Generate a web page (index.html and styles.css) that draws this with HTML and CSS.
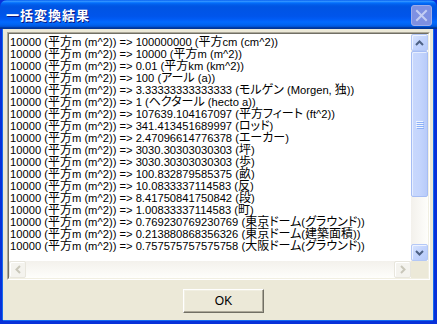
FILE: index.html
```html
<!DOCTYPE html>
<html lang="ja">
<head>
<meta charset="utf-8">
<title>一括変換結果</title>
<link rel="stylesheet" href="styles.css">
</head>
<body>
<div class="window">
  <div class="titlebar">
    <span class="title">一括変換結果</span>
    <span class="close" aria-label="閉じる">
      <svg width="21" height="21" viewBox="0 0 21 21">
        <path d="M6 6 L15 15 M15 6 L6 15" stroke="#c3cdf3" stroke-width="2" stroke-linecap="square"/>
      </svg>
    </span>
  </div>
  <div class="client">
    <div class="editbox">
      <div class="edit-grid">
        <div class="text">
          <div class="line">10000 (<span class="j">平方</span>m (m^2)) =&gt; 100000000 (<span class="j">平方</span>cm (cm^2))</div>
          <div class="line">10000 (<span class="j">平方</span>m (m^2)) =&gt; 10000 (<span class="j">平方</span>m (m^2))</div>
          <div class="line">10000 (<span class="j">平方</span>m (m^2)) =&gt; 0.01 (<span class="j">平方</span>km (km^2))</div>
          <div class="line">10000 (<span class="j">平方</span>m (m^2)) =&gt; 100 (<span class="j">アール</span> (a))</div>
          <div class="line">10000 (<span class="j">平方</span>m (m^2)) =&gt; 3.33333333333333 (<span class="j">モルゲン</span> (Morgen, <span class="j">独</span>))</div>
          <div class="line">10000 (<span class="j">平方</span>m (m^2)) =&gt; 1 (<span class="j">ヘクタール</span> (hecto a))</div>
          <div class="line">10000 (<span class="j">平方</span>m (m^2)) =&gt; 107639.104167097 (<span class="j">平方フィート</span> (ft^2))</div>
          <div class="line">10000 (<span class="j">平方</span>m (m^2)) =&gt; 341.413451689997 (<span class="j">ロッド</span>)</div>
          <div class="line">10000 (<span class="j">平方</span>m (m^2)) =&gt; 2.47096614776378 (<span class="j">エーカー</span>)</div>
          <div class="line">10000 (<span class="j">平方</span>m (m^2)) =&gt; 3030.30303030303 (<span class="j">坪</span>)</div>
          <div class="line">10000 (<span class="j">平方</span>m (m^2)) =&gt; 3030.30303030303 (<span class="j">歩</span>)</div>
          <div class="line">10000 (<span class="j">平方</span>m (m^2)) =&gt; 100.832879585375 (<span class="j">畝</span>)</div>
          <div class="line">10000 (<span class="j">平方</span>m (m^2)) =&gt; 10.0833337114583 (<span class="j">反</span>)</div>
          <div class="line">10000 (<span class="j">平方</span>m (m^2)) =&gt; 8.41750841750842 (<span class="j">段</span>)</div>
          <div class="line">10000 (<span class="j">平方</span>m (m^2)) =&gt; 1.00833337114583 (<span class="j">町</span>)</div>
          <div class="line">10000 (<span class="j">平方</span>m (m^2)) =&gt; 0.769230769230769 (<span class="j">東京ドーム</span>(<span class="j">グラウンド</span>))</div>
          <div class="line">10000 (<span class="j">平方</span>m (m^2)) =&gt; 0.213880868356326 (<span class="j">東京ドーム</span>(<span class="j">建築面積</span>))</div>
          <div class="line">10000 (<span class="j">平方</span>m (m^2)) =&gt; 0.757575757575758 (<span class="j">大阪ドーム</span>(<span class="j">グラウンド</span>))</div>
        </div>
        <div class="vscroll">
          <div class="sbtn">
            <svg width="9" height="6" viewBox="0 0 9 6"><path d="M1 5 L4.5 1.5 L8 5" fill="none" stroke="#4d6185" stroke-width="2"/></svg>
          </div>
          <div class="vtrack">
            <div class="thumb">
              <span class="grip"></span><span class="grip"></span><span class="grip"></span><span class="grip"></span>
            </div>
          </div>
          <div class="sbtn">
            <svg width="9" height="6" viewBox="0 0 9 6"><path d="M1 1 L4.5 4.5 L8 1" fill="none" stroke="#4d6185" stroke-width="2"/></svg>
          </div>
        </div>
        <div class="hscroll">
          <div class="sbtn disabled">
            <svg width="6" height="9" viewBox="0 0 6 9"><path d="M5 1 L1.5 4.5 L5 8" fill="none" stroke="#c9c7ba" stroke-width="2"/></svg>
          </div>
          <div class="htrack"></div>
          <div class="sbtn disabled">
            <svg width="6" height="9" viewBox="0 0 6 9"><path d="M1 1 L4.5 4.5 L1 8" fill="none" stroke="#c9c7ba" stroke-width="2"/></svg>
          </div>
        </div>
        <div class="corner"></div>
      </div>
    </div>
    <div class="buttons">
      <button class="ok" type="button">OK</button>
    </div>
  </div>
</div>
</body>
</html>
```
FILE: styles.css
```css
html, body {
  margin: 0;
  padding: 0;
  background: #0831d9;
}

.window {
  width: 437px;
  height: 324px;
  display: flex;
  flex-direction: column;
  box-sizing: border-box;
  border-radius: 7px 7px 0 0;
  overflow: hidden;
  background: #0831d9;
}

.titlebar {
  height: 29px;
  flex: none;
  display: flex;
  align-items: center;
  justify-content: space-between;
  padding: 0 6px 0 6px;
  box-sizing: border-box;
  background: linear-gradient(to bottom,
    #0058ee 0%, #3593ff 4%, #288eff 6%, #127dff 8%, #036ffc 10%,
    #0262ee 14%, #0057e5 20%, #0054e3 24%, #0055eb 56%, #005bf5 66%,
    #026afe 76%, #0062ef 86%, #0052d6 92%, #0040ab 94%, #003092 100%);
}

.title {
  font-family: "Noto Sans CJK JP", sans-serif;
  font-weight: bold;
  font-size: 13px;
  line-height: 16px;
  color: #ffffff;
  text-shadow: 1px 1px 0 #0a1883;
  letter-spacing: 1px;
  padding-top: 1px;
}

.close {
  width: 21px;
  height: 21px;
  box-sizing: border-box;
  border: 1px solid #9eade9;
  border-radius: 3px;
  background: #7e90e2;
  display: flex;
  align-items: center;
  justify-content: center;
  margin-right: -1px;
  margin-top: 1px;
}
.close svg { display: block; margin: -1px; }

.client {
  flex: 1;
  display: flex;
  flex-direction: column;
  background: #ece9d8;
  margin: 0 4px 4px 3px;
  padding: 3px 3px 0 4px;
  box-shadow: -1px 0 0 #166aee, 1px 0 0 #166aee, 0 1px 0 #166aee;
}

.editbox {
  height: 248px;
  flex: none;
  box-sizing: border-box;
  border-top: 1px solid #aca899;
  border-left: 1px solid #aca899;
  border-right: 1px solid #ffffff;
  border-bottom: 1px solid #ffffff;
}

.edit-grid {
  height: 100%;
  box-sizing: border-box;
  border-top: 1px solid #716f64;
  border-left: 1px solid #716f64;
  border-right: 1px solid #f1efe2;
  border-bottom: 1px solid #f1efe2;
  display: grid;
  grid-template-columns: 1fr 17px;
  grid-template-rows: 1fr 17px;
  background: #ffffff;
}

.text {
  overflow: hidden;
  padding: 2px 0 0 1px;
  font-family: "Liberation Sans", "Noto Sans CJK JP", sans-serif;
  font-size: 11.2px;
  line-height: 12px;
  color: #000000;
}

.line {
  height: 12px;
  white-space: nowrap;
}

.j {
  font-family: "Noto Sans CJK JP", sans-serif;
  font-feature-settings: "palt";
  font-size: 12px;
  line-height: 0;
}

.vscroll {
  display: flex;
  flex-direction: column;
  background: linear-gradient(to right, #f3f1ec, #fefefb);
}

.hscroll {
  display: flex;
  background: linear-gradient(to bottom, #f3f1ec, #fefefb);
}

.sbtn {
  width: 17px;
  height: 17px;
  flex: none;
  box-sizing: border-box;
  display: flex;
  align-items: center;
  justify-content: center;
  border: 1px solid #b4c8f6;
  border-radius: 2px;
  background: linear-gradient(135deg, #d8e4fe 0%, #c3d4fd 50%, #b6cafa 100%);
  box-shadow: inset 1px 1px 0 #eef3ff;
}

.sbtn.disabled {
  border-color: #e8e6dd;
  background: #f4f3ee;
  box-shadow: inset 1px 1px 0 #ffffff;
}

.vtrack {
  flex: 1;
  display: flex;
  flex-direction: column;
}

.thumb {
  height: 146px;
  box-sizing: border-box;
  border: 1px solid #a6bdf4;
  border-radius: 2px;
  background: linear-gradient(to right, #c9d8fc 0%, #c4d5fd 50%, #b8cbf9 100%);
  box-shadow: inset 1px 1px 0 #e6eeff;
  display: flex;
  flex-direction: column;
  align-items: center;
  justify-content: center;
  gap: 1px;
}

.grip {
  width: 7px;
  height: 1px;
  background: #eef4fe;
  box-shadow: 1px 1px 0 #8cb0f8;
}

.htrack { flex: 1; }

.corner { background: #ece9d8; }

.buttons {
  flex: 1;
  display: flex;
  justify-content: center;
  align-items: flex-start;
  padding-top: 9px;
  padding-left: 10px;
}

.ok {
  width: 81px;
  height: 24px;
  margin: 0;
  padding: 0;
  box-sizing: border-box;
  font-family: "Liberation Sans", sans-serif;
  font-size: 12px;
  color: #000000;
  background: #ece9d8;
  border-top: 1px solid #ffffff;
  border-left: 1px solid #ffffff;
  border-right: 1px solid #716f64;
  border-bottom: 1px solid #716f64;
  box-shadow: inset -1px -1px 0 #aca899, inset 1px 1px 0 #f1efe2;
}
```
